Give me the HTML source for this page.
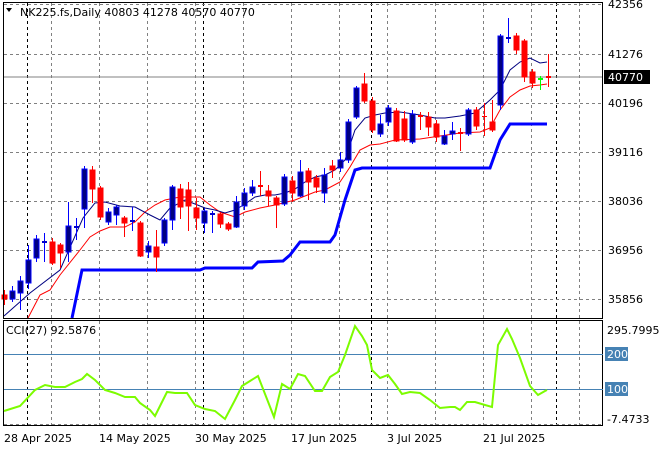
<!DOCTYPE html>
<html><head><meta charset="utf-8"><style>
body{margin:0;background:#fff;width:660px;height:450px;overflow:hidden}
svg{display:block}
text{font-family:"DejaVu Sans","Liberation Sans",sans-serif;font-size:11px;fill:#000}
</style></head><body>
<svg id="s" width="660" height="450" xmlns="http://www.w3.org/2000/svg">
<rect width="660" height="450" fill="#fff"/>
<g id="grid"></g>
<line x1="3" y1="77" x2="603" y2="77" stroke="#808080" stroke-width="1"/>
<g id="lines"></g>
<g id="candles"></g>
<rect x="3.5" y="2.5" width="599" height="316" fill="none" stroke="#000"/>
<rect x="3.5" y="320.5" width="599" height="105" fill="none" stroke="#000"/>
<line x1="4" y1="354.5" x2="603" y2="354.5" stroke="#4682b4"/>
<line x1="4" y1="389.5" x2="603" y2="389.5" stroke="#4682b4"/>
<polyline fill="none" stroke="#7cfc00" stroke-width="2" points="4,411 20,406 35,390 45,385 55,387 65,387 75,382 82,379 87,374 95,380 105,390 115,393 125,397 135,397 140,403 150,410 155,416 167,392 175,393 187,393 195,405 205,409 215,411 225,419 235,400 242,386 250,381 258,376 274,417 282,384 290,389 298,374 305,376 315,391 322,391 330,377 338,372 345,355 355,326 362,336 367,345 372,370 380,378 388,375 395,384 402,394 410,392 420,393 430,400 440,408 450,407 455,407 460,410 467,402 475,402 485,405 492,407 498,345 507,329 512,339 520,358 530,386 538,395 545,391 547,390"/>
<polygon points="6,8 12,8 9,12" fill="#000"/>
<text x="20" y="16">NK225.fs,Daily  40803 41278 40570 40770</text>
<text x="6" y="334">CCI(27) 92.5876</text>
<g id="axis"></g>
<rect x="604" y="70" width="46" height="14" fill="#000"/>
<text x="608" y="81" style="fill:#fff">40770</text>
<rect x="605" y="347" width="23" height="14" fill="#4682b4"/>
<text x="607" y="358" style="fill:#fff">200</text>
<rect x="605" y="382" width="23" height="14" fill="#4682b4"/>
<text x="607" y="393" style="fill:#fff">100</text>
<text x="607" y="334">295.7995</text>
<text x="607" y="423">-7.4733</text>
<text x="4" y="442">28 Apr 2025</text>
<text x="99" y="442">14 May 2025</text>
<text x="195" y="442">30 May 2025</text>
<text x="291" y="442">17 Jun 2025</text>
<text x="387" y="442">3 Jul 2025</text>
<text x="483" y="442">21 Jul 2025</text>
</svg>
<script>
var NS="http://www.w3.org/2000/svg";
function el(p,n,a){var e=document.createElementNS(NS,n);for(var k in a)e.setAttribute(k,a[k]);p.appendChild(e);return e;}
var g=document.getElementById('grid');
[3,51,99,147,195,243,291,339,387,435,483,531,579].forEach(function(x){
 el(g,'line',{x1:x+.5,y1:3,x2:x+.5,y2:318,stroke:'#808080','stroke-dasharray':'3,3'});
 el(g,'line',{x1:x+.5,y1:321,x2:x+.5,y2:425,stroke:'#808080','stroke-dasharray':'3,3'});});
[27,203,371,556].forEach(function(x){
 el(g,'line',{x1:x+.5,y1:3,x2:x+.5,y2:318,stroke:'#000','stroke-dasharray':'3,3'});
 el(g,'line',{x1:x+.5,y1:321,x2:x+.5,y2:425,stroke:'#000','stroke-dasharray':'3,3'});});
[4,54,103,152,201,250,299].forEach(function(y){el(g,'line',{x1:4,y1:y+.5,x2:603,y2:y+.5,stroke:'#808080','stroke-dasharray':'3,3'});});
el(g,'line',{x1:4,y1:424.5,x2:603,y2:424.5,stroke:'#808080','stroke-dasharray':'3,3'});
var ax=document.getElementById('axis');
[[42356,8],[41276,58],[40196,107],[39116,156],[38036,205],[36956,254],[35856,303]].forEach(function(a){
 var t=el(ax,'text',{x:608,y:a[1]});t.textContent=a[0];});
var L=document.getElementById('lines');
el(L,'polyline',{fill:'none',stroke:'#0000ff','stroke-width':3,points:"72,318 82,270 200,270 205,268 252,268 258,262 283,261 290,255 300,242 330,242 335,235 345,200 355,170 362,168 490,168 500,140 510,124 547,124"});
el(L,'polyline',{fill:'none',stroke:'#ff0000','stroke-width':1,points:"28,318 40,295 50,290 60,275 80,250 90,237 100,231 110,227 125,227 135,222 145,212 155,205 165,200 180,197 200,197 210,205 220,212 235,217 245,212 260,208 275,205 295,200 315,192 325,190 340,182 350,167 360,150 370,145 380,144 395,140 420,139 440,136 460,133 480,132 490,128 500,110 510,97 520,90 530,86 540,85 547,84"});
el(L,'polyline',{fill:'none',stroke:'#000080','stroke-width':1,points:"4,316 30,293 60,270 83,218 95,203 105,202 120,206 135,207 150,215 160,220 170,208 185,200 195,204 205,208 215,210 225,213 235,210 245,204 255,197 265,195 275,195 285,193 295,189 305,182 315,177 325,175 335,170 345,160 355,130 365,118 375,115 385,113 400,112 420,115 435,118 445,118 460,116 475,113 490,100 500,90 510,70 520,62 530,58 540,63 547,62"});
// x, bodyTop, bodyBot, wickTop, wickBot, color
var C=[[4,295,299,290,305,'r'],[12,291,299,286,302,'b'],[20,281,293,276,310,'b'],[28,260,283,245,289,'b'],[36,239,258,235,262,'b'],[44,241,243,233,262,'b'],[52,242,263,238,265,'r'],[60,245,253,243,268,'r'],[68,226,252,202,262,'b'],[76,226,228,218,240,'b'],[84,169,209,166,228,'b'],[92,170,189,166,203,'r'],[100,188,217,186,220,'r'],[108,212,222,208,225,'b'],[116,207,215,205,225,'b'],[124,218,223,216,237,'r'],[132,220,222,207,231,'b'],[140,223,256,221,257,'r'],[148,246,252,241,258,'b'],[156,247,257,230,272,'r'],[164,220,243,218,246,'b'],[172,187,220,185,230,'b'],[180,189,207,184,219,'r'],[188,190,206,182,231,'r'],[196,208,218,198,230,'r'],[204,211,223,208,233,'b'],[212,213,215,211,233,'b'],[220,214,224,212,228,'r'],[228,224,229,222,231,'r'],[236,202,227,196,228,'b'],[244,193,206,188,210,'b'],[252,187,193,180,196,'b'],[260,185,187,171,196,'r'],[268,191,196,185,206,'r'],[276,198,205,196,228,'r'],[284,177,204,174,206,'b'],[292,181,193,176,202,'r'],[300,172,196,160,197,'b'],[308,171,182,168,200,'r'],[316,178,187,175,193,'r'],[324,175,193,168,203,'b'],[332,166,170,160,178,'r'],[340,160,168,152,172,'b'],[348,122,160,119,163,'b'],[356,88,117,86,119,'b'],[364,84,101,73,103,'r'],[372,101,130,97,133,'r'],[380,124,134,115,137,'b'],[388,108,122,105,126,'b'],[396,111,141,108,142,'r'],[404,119,140,111,142,'r'],[412,114,142,110,144,'b'],[420,115,117,112,130,'r'],[428,117,127,112,136,'r'],[436,124,137,120,142,'r'],[444,136,144,130,145,'b'],[452,131,134,122,140,'b'],[460,132,134,128,151,'r'],[468,110,134,108,136,'b'],[476,110,126,107,130,'r'],[484,116,117,103,136,'r'],[492,122,130,100,132,'r'],[500,36,105,34,110,'b'],[508,37,39,18,43,'b'],[516,36,50,33,54,'r'],[524,41,77,39,82,'r'],[532,72,83,69,88,'r'],[540,78,80,76,90,'g'],[548,76,78,54,87,'r']];
var G=document.getElementById('candles');
C.forEach(function(c){
 var col=c[5]=='r'?'#ff0000':(c[5]=='b'?'#0000cd':'#00ff00');
 el(G,'line',{x1:c[0]+.5,y1:c[3],x2:c[0]+.5,y2:c[4],stroke:c[5]=='b'?'#0000ff':col,'stroke-width':1});
 var h=Math.max(1,c[2]-c[1]);
 if(h<=2){el(G,'rect',{x:c[0]-2,y:c[1],width:5,height:h,fill:col});}
 else{el(G,'rect',{x:c[0]-2,y:c[1],width:5,height:h,fill:c[5]=='b'?'#000080':col,stroke:c[5]=='b'?'#0000ff':col,'stroke-width':1});}
});
</script>
</body></html>
